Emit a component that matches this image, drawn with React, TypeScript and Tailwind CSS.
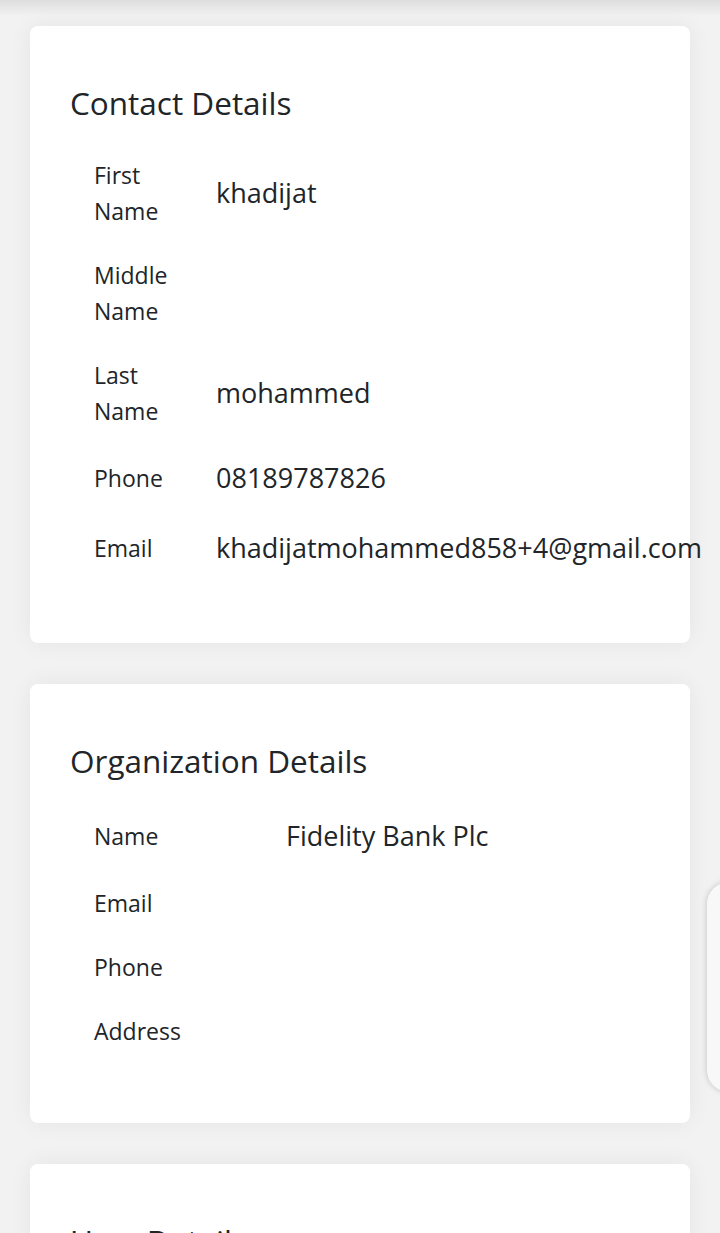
import * as React from "react";

type Row = { label: string; value?: string };

const contact: Row[] = [
  { label: "First Name", value: "khadijat" },
  { label: "Middle Name" },
  { label: "Last Name", value: "mohammed" },
  { label: "Phone", value: "08189787826" },
  { label: "Email", value: "khadijatmohammed858+4@gmail.com" },
];

const org: Row[] = [
  { label: "Name", value: "Fidelity Bank Plc" },
  { label: "Email" },
  { label: "Phone" },
  { label: "Address" },
];

function DetailCard({
  title,
  rows,
  labelWidth,
}: {
  title: string;
  rows?: Row[];
  labelWidth: string;
}) {
  return (
    <div className="rounded-lg bg-white px-10 pt-[53px] pb-[60px] shadow-[0_0_24px_rgba(0,0,0,0.06)]">
      <h2 className="text-[31.5px] leading-[48px] text-[#212529]">{title}</h2>
      {rows && (
        <div className="mt-4">
          {rows.map((r) => (
            <div key={r.label} className="flex items-center py-[14px]">
              <div
                className={`${labelWidth} shrink-0 px-6 text-[23px] leading-[36px] text-[#212529]`}
              >
                {r.label}
              </div>
              {r.value && (
                <div className="whitespace-nowrap px-6 text-[27px] leading-[42px] text-[#212529]">
                  {r.value}
                </div>
              )}
            </div>
          ))}
        </div>
      )}
    </div>
  );
}

export default function App() {
  return (
    <div
      className="relative h-[1233px] overflow-hidden bg-[#f2f2f2] px-[30px] pt-[26px]"
      style={{ fontFamily: '"Open Sans", "Noto Sans", sans-serif' }}
    >
      <div className="pointer-events-none absolute inset-x-0 top-0 h-4 bg-gradient-to-b from-[#dedede] to-transparent" />

      <div className="flex flex-col gap-[41px]">
        <DetailCard title="Contact Details" rows={contact} labelWidth="w-[122px]" />
        <DetailCard title="Organization Details" rows={org} labelWidth="w-[192px]" />
        <DetailCard title="User Details" labelWidth="w-[192px]" />
      </div>

      <div className="absolute left-[707px] top-[882px] h-[210px] w-[40px] rounded-l-[22px] bg-[#f8f8f8] shadow-[0_0_6px_rgba(0,0,0,0.2)]" />
    </div>
  );
}
